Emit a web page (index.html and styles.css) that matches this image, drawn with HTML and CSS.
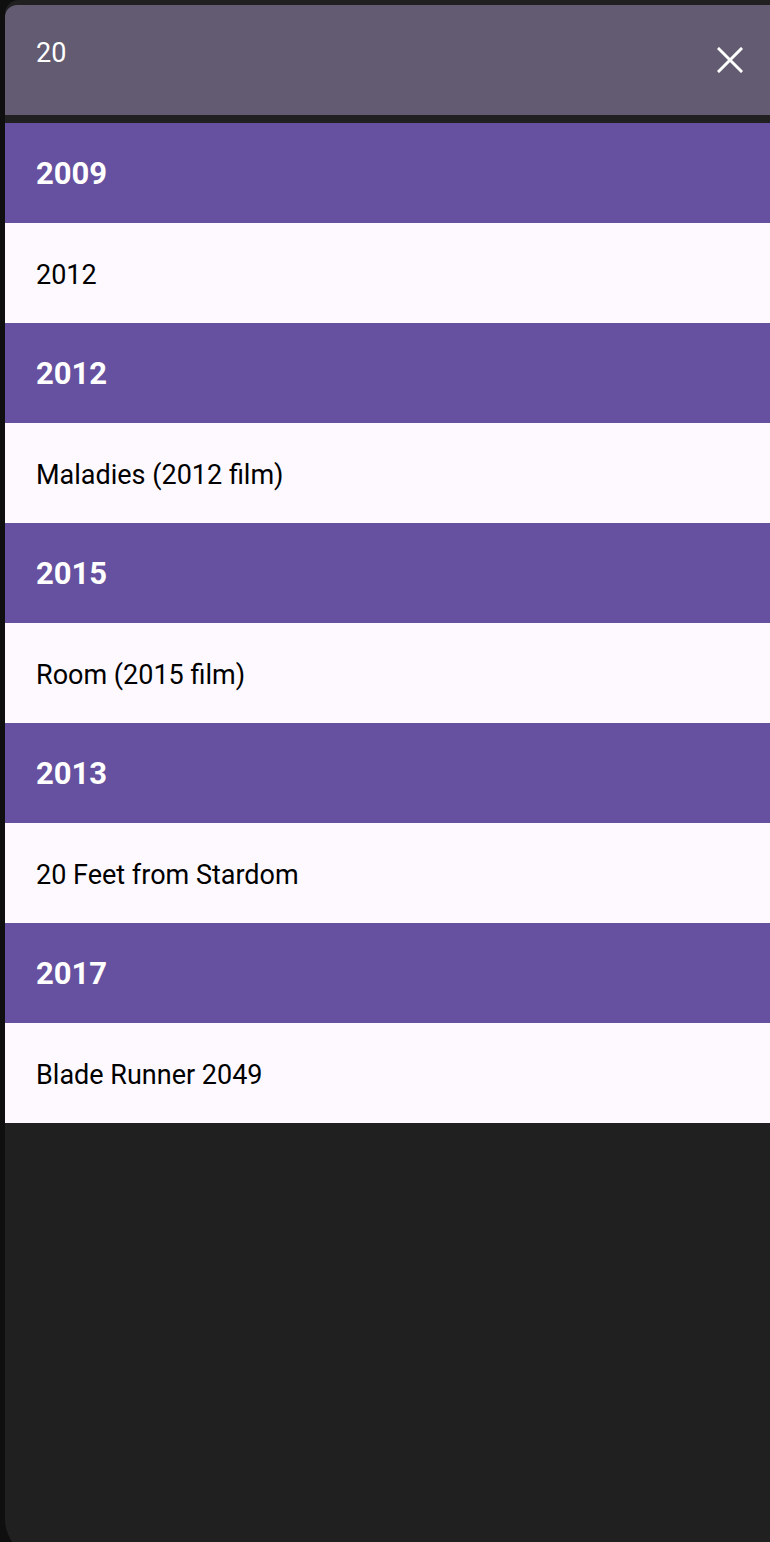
FILE: index.html
```html
<!DOCTYPE html>
<html lang="en">
<head>
<meta charset="utf-8">
<title>Search</title>
<link rel="stylesheet" href="styles.css">
</head>
<body>
<div class="panel">
  <header class="search-bar">
    <span class="query">20</span>
    <button class="close" aria-label="Clear">
      <svg viewBox="0 0 26 26" width="26" height="26"><path d="M2 2 L24 24 M24 2 L2 24" stroke="#fff" stroke-width="3" stroke-linecap="square" fill="none"/></svg>
    </button>
  </header>
  <ul class="results">
    <li class="year">2009</li>
    <li class="title">2012</li>
    <li class="year">2012</li>
    <li class="title">Maladies (2012 film)</li>
    <li class="year">2015</li>
    <li class="title">Room (2015 film)</li>
    <li class="year">2013</li>
    <li class="title">20 Feet from Stardom</li>
    <li class="year">2017</li>
    <li class="title">Blade Runner 2049</li>
  </ul>
</div>
</body>
</html>
```
FILE: styles.css
```css
html, body {
  margin: 0;
  padding: 0;
  height: 100%;
  overflow: hidden;
  background: #0f0f10;
  font-family: Roboto, "Noto Sans", sans-serif;
}
.panel {
  margin-left: 5px;
  height: calc(100vh + 17px);
  background: #202020;
  border-radius: 14px 0 0 40px;
  padding-top: 5px;
  box-sizing: border-box;
  overflow: hidden;
}
.search-bar {
  height: 110px;
  background: #625b71;
  border-top-left-radius: 12px;
  display: flex;
  align-items: flex-start;
  justify-content: space-between;
  box-sizing: border-box;
  padding: 32px 27px 0 31px;
}
.query {
  color: #fff;
  font-size: 27px;
  line-height: 32px;
}
.close {
  background: none;
  border: 0;
  padding: 0;
  margin-top: 10px;
  width: 26px;
  height: 26px;
  display: block;
}
.close svg {
  display: block;
}
.results {
  list-style: none;
  margin: 8px 0 0;
  padding: 0;
}
.results li {
  height: 100px;
  display: flex;
  align-items: center;
  padding-left: 31px;
  box-sizing: border-box;
}
.year {
  background: #6651a0;
  color: #fff;
  font-weight: 700;
  font-size: 31px;
}
.title {
  background: #fdf9ff;
  color: #000;
  font-size: 27px;
  padding-top: 4px;
}
```
